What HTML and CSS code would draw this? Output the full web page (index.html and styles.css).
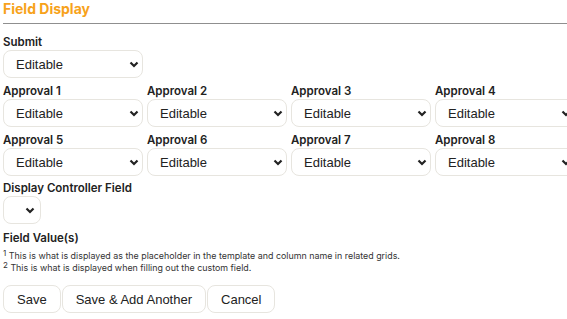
FILE: index.html
```html
<!DOCTYPE html>
<html lang="en">
<head>
<meta charset="UTF-8">
<meta name="viewport" content="width=device-width, initial-scale=1.0">
<title>Field Display</title>
<link rel="stylesheet" href="styles.css">
</head>
<body>
<div class="page">
  <h2 class="section-title">Field Display</h2>

  <div class="field first">
    <label>Submit</label>
    <div class="select-wrap">
      <select><option>Editable</option></select>
      <svg class="chev" viewBox="0 0 10 7"><path d="M1.5 1.5 5 5 8.5 1.5" /></svg>
    </div>
  </div>

  <div class="approvals">
    <div class="field">
      <label>Approval 1</label>
      <div class="select-wrap">
        <select><option>Editable</option></select>
        <svg class="chev" viewBox="0 0 10 7"><path d="M1.5 1.5 5 5 8.5 1.5" /></svg>
      </div>
    </div>
    <div class="field">
      <label>Approval 2</label>
      <div class="select-wrap">
        <select><option>Editable</option></select>
        <svg class="chev" viewBox="0 0 10 7"><path d="M1.5 1.5 5 5 8.5 1.5" /></svg>
      </div>
    </div>
    <div class="field">
      <label>Approval 3</label>
      <div class="select-wrap">
        <select><option>Editable</option></select>
        <svg class="chev" viewBox="0 0 10 7"><path d="M1.5 1.5 5 5 8.5 1.5" /></svg>
      </div>
    </div>
    <div class="field">
      <label>Approval 4</label>
      <div class="select-wrap">
        <select><option>Editable</option></select>
        <svg class="chev" viewBox="0 0 10 7"><path d="M1.5 1.5 5 5 8.5 1.5" /></svg>
      </div>
    </div>
    <div class="field">
      <label>Approval 5</label>
      <div class="select-wrap">
        <select><option>Editable</option></select>
        <svg class="chev" viewBox="0 0 10 7"><path d="M1.5 1.5 5 5 8.5 1.5" /></svg>
      </div>
    </div>
    <div class="field">
      <label>Approval 6</label>
      <div class="select-wrap">
        <select><option>Editable</option></select>
        <svg class="chev" viewBox="0 0 10 7"><path d="M1.5 1.5 5 5 8.5 1.5" /></svg>
      </div>
    </div>
    <div class="field">
      <label>Approval 7</label>
      <div class="select-wrap">
        <select><option>Editable</option></select>
        <svg class="chev" viewBox="0 0 10 7"><path d="M1.5 1.5 5 5 8.5 1.5" /></svg>
      </div>
    </div>
    <div class="field">
      <label>Approval 8</label>
      <div class="select-wrap">
        <select><option>Editable</option></select>
        <svg class="chev" viewBox="0 0 10 7"><path d="M1.5 1.5 5 5 8.5 1.5" /></svg>
      </div>
    </div>
  </div>

  <div class="field">
    <label>Display Controller Field</label>
    <div class="select-wrap small">
      <select><option></option></select>
      <svg class="chev" viewBox="0 0 10 7"><path d="M1.5 1.5 5 5 8.5 1.5" /></svg>
    </div>
  </div>

  <div class="field values">
    <label>Field Value(s)</label>
  </div>

  <p class="note"><sup>1</sup> This is what is displayed as the placeholder in the template and column name in related grids.</p>
  <p class="note"><sup>2</sup> This is what is displayed when filling out the custom field.</p>

  <div class="actions">
    <button>Save</button>
    <button>Save &amp; Add Another</button>
    <button>Cancel</button>
  </div>
</div>
</body>
</html>
```

FILE: styles.css
```css
html, body {
  margin: 0;
  padding: 0;
  background: #fff;
  overflow: hidden;
}
body {
  font-family: Inter, "Noto Sans", sans-serif;
  color: #222;
}
.page {
  padding: 0 0 0 3px;
}
.section-title {
  margin: 0;
  padding: 0 0 6px;
  font-size: 14px;
  line-height: 17px;
  font-weight: 700;
  color: #f7a21b;
  border-bottom: 1px solid #8f8f8f;
}
.field {
  display: flex;
  flex-direction: column;
}
.field label {
  display: block;
  font-size: 11.5px;
  font-weight: 600;
  line-height: 16px;
  color: #222;
  margin-top: 4px;
}
.field.first label {
  margin-top: 10px;
}
.approvals {
  display: grid;
  grid-template-columns: repeat(4, 140px);
  column-gap: 4px;
}
.approvals .field label {
  margin-top: 5px;
}
.select-wrap {
  position: relative;
  width: 140px;
  height: 28px;
}
.select-wrap.small {
  width: 38px;
}
.select-wrap select {
  appearance: none;
  -webkit-appearance: none;
  width: 100%;
  height: 100%;
  box-sizing: border-box;
  border: 1px solid #e7e5df;
  border-radius: 8px;
  background: #fff;
  padding: 0 24px 0 12px;
  font-family: "Liberation Sans", Arial, sans-serif;
  font-size: 13px;
  color: #222;
}
.chev {
  position: absolute;
  right: 4px;
  top: 11px;
  width: 10px;
  height: 7px;
  fill: none;
  stroke: #222;
  stroke-width: 2.2;
  pointer-events: none;
}
.small .chev {
  right: 6px;
}
.values label {
  margin-top: 6px;
}
.note {
  margin: 0;
  font-size: 8.9px;
  line-height: 12px;
  color: #333;
}
.note:first-of-type {
  margin-top: 4px;
}
.note sup {
  font-size: 8px;
  vertical-align: 3px;
  line-height: 0;
}
.actions {
  display: flex;
  gap: 1px;
  margin-top: 11px;
}
.actions button {
  height: 28px;
  padding: 0 13px;
  background: #fff;
  border: 1px solid #e7e5df;
  border-radius: 8px;
  font-family: "Liberation Sans", Arial, sans-serif;
  font-size: 13px;
  color: #222;
}
```
